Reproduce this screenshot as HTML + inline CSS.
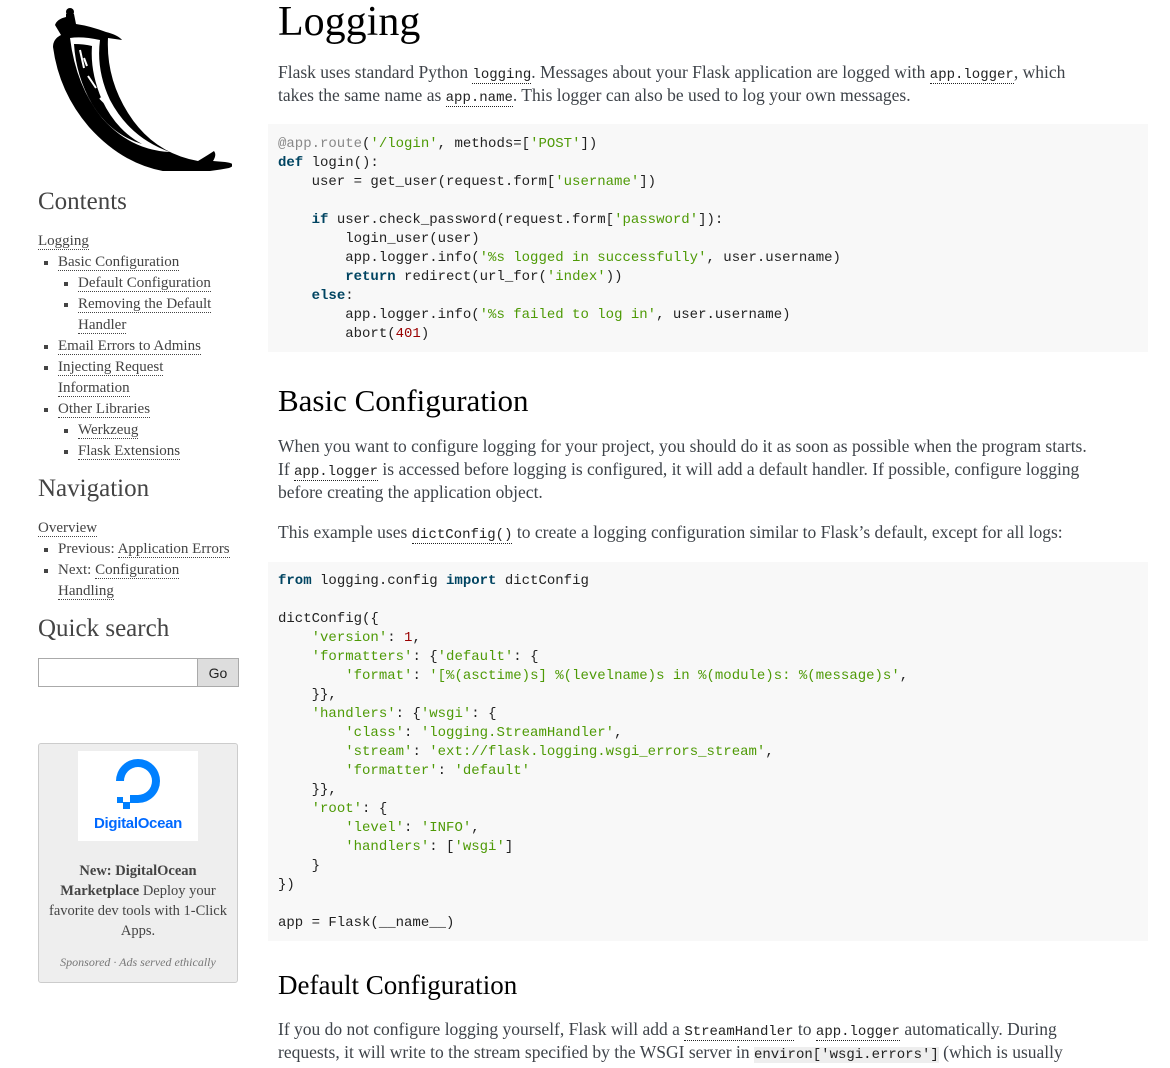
<!DOCTYPE html>
<html><head><meta charset="utf-8"><style>
body{margin:0;width:1170px;height:1068px;overflow:hidden;background:#fff;font-family:"Liberation Serif",serif;color:#3e4349;position:relative}
.a{position:absolute;white-space:nowrap}
.p{font-size:17.5px;line-height:23px;color:#3e4349}
code,.tt{font-family:"Liberation Mono",monospace;font-size:14px;line-height:10px;color:#222}
.u{border-bottom:1px dotted #222}
.pre{position:absolute;left:268px;width:880px;background:#f8f8f8;font-family:"Liberation Mono",monospace;font-size:14px;line-height:19px;color:#222;white-space:pre;padding-left:10px;box-sizing:border-box}
.k{color:#004461;font-weight:bold}.s{color:#4e9a06}.n{color:#990000}.d{color:#888}
h1,h2{margin:0;font-weight:normal;color:#000}
.sb{font-size:15px;line-height:21px;color:#444}
.sb a{color:#444;text-decoration:none;border-bottom:1px dotted #444}
.sb .b{position:absolute;width:4px;height:4px;background:#444}
.sh{font-size:25px;color:#444}
</style></head><body>
<svg class="a" style="left:40px;top:6px" width="192" height="165" viewBox="0 0 192 165">
<circle cx="30" cy="6" r="4" fill="#000"/>
<path d="M26 8 h8 l2 10 q14 2 30 8 q12 3 16 8 l-14 -2 q-2 40 20 75 q25 40 70 48 q10 -6 16 -10 q3 4 -1 10 l12 1 q14 2 4 6 q-30 6 -60 4 q-45 -6 -80 -45 q-30 -35 -36 -80 q0 -8 8 -12 l-6 -10 q2 -6 11 -8z" fill="#000"/>
<path d="M30 32 q12 -2 30 2 q-4 30 10 60 q20 38 60 52 q-40 -2 -68 -34 q-26 -32 -32 -80z" fill="#fff"/>
<path d="M34 38 q10 0 18 2 q-2 26 10 54 q14 30 40 44 q-32 -10 -50 -40 q-16 -28 -18 -60z" fill="#000"/>
<path d="M40 44 l4 18 M48 70 l8 12 M60 92 l10 10 M44 52 l3 8" stroke="#fff" stroke-width="2"/>
</svg>
<div class="a sh" style="left:38px;top:188px">Contents</div>
<div class="sb">
<div class="a" style="left:38px;top:231px"><a>Logging</a></div>
<div class="b" style="left:44px;top:261px"></div><div class="a" style="left:58px;top:252px"><a>Basic Configuration</a></div>
<div class="b" style="left:64px;top:282px"></div><div class="a" style="left:78px;top:273px"><a>Default Configuration</a></div>
<div class="b" style="left:64px;top:303px"></div><div class="a" style="left:78px;top:294px"><a>Removing the Default</a></div>
<div class="a" style="left:78px;top:315px"><a>Handler</a></div>
<div class="b" style="left:44px;top:345px"></div><div class="a" style="left:58px;top:336px"><a>Email Errors to Admins</a></div>
<div class="b" style="left:44px;top:366px"></div><div class="a" style="left:58px;top:357px"><a>Injecting Request</a></div>
<div class="a" style="left:58px;top:378px"><a>Information</a></div>
<div class="b" style="left:44px;top:408px"></div><div class="a" style="left:58px;top:399px"><a>Other Libraries</a></div>
<div class="b" style="left:64px;top:429px"></div><div class="a" style="left:78px;top:420px"><a>Werkzeug</a></div>
<div class="b" style="left:64px;top:450px"></div><div class="a" style="left:78px;top:441px"><a>Flask Extensions</a></div>
</div>
<div class="a sh" style="left:38px;top:475px">Navigation</div>
<div class="sb">
<div class="a" style="left:38px;top:518px"><a>Overview</a></div>
<div class="b" style="left:44px;top:548px"></div><div class="a" style="left:58px;top:539px">Previous: <a>Application Errors</a></div>
<div class="b" style="left:44px;top:569px"></div><div class="a" style="left:58px;top:560px">Next: <a>Configuration</a></div>
<div class="a" style="left:58px;top:581px"><a>Handling</a></div>
</div>
<div class="a sh" style="left:38px;top:615px">Quick search</div>
<div class="a" style="left:38px;top:658px;width:159px;height:27px;border:1px solid #aaa;background:#fff"></div>
<div class="a" style="left:197px;top:658px;width:40px;height:27px;border:1px solid #aaa;background:#ddd;font-family:'Liberation Sans',sans-serif;font-size:14px;line-height:28px;text-align:center;color:#222">Go</div>
<div class="a" style="left:38px;top:743px;width:198px;height:238px;background:#eee;border:1px solid #ccc;border-radius:3px;white-space:normal;text-align:center">
<div style="margin:7px auto 0;width:120px;height:90px;background:#fff;position:relative">
<svg width="120" height="60" viewBox="0 0 120 60" style="position:absolute;left:0;top:6px"><path d="M60 46 v-8 a14 14 0 1 0 -14 -14 h-8 a22 22 0 1 1 22 22z" fill="#0080ff"/><rect x="52" y="38" width="8" height="8" fill="#0080ff"/><rect x="45" y="45" width="7" height="7" fill="#0080ff"/><rect x="39" y="40" width="6" height="6" fill="#0080ff"/></svg>
<div style="position:absolute;top:64px;width:120px;font-family:'Liberation Sans',sans-serif;font-size:15px;color:#0069ff;font-weight:bold;letter-spacing:-0.3px">DigitalOcean</div></div>
<div style="font-size:14.5px;line-height:20px;color:#444;margin-top:20px;padding:0 6px"><b>New: DigitalOcean Marketplace</b> Deploy your favorite dev tools with 1-Click Apps.</div>
<div style="font-size:12px;font-style:italic;color:#777;margin-top:14px">Sponsored · Ads served ethically</div>
</div>

<h1 class="a" style="left:278px;top:-2px;font-size:42px">Logging</h1>
<div class="a p" style="left:278px;top:61px">Flask uses standard Python <code class="u">logging</code>. Messages about your Flask application are logged with <code class="u">app.logger</code>, which<br>takes the same name as <code class="u">app.name</code>. This logger can also be used to log your own messages.</div>
<div class="pre" style="top:124px;height:228px;padding-top:11px"><span class="d">@app.route</span>(<span class="s">'/login'</span>, methods=[<span class="s">'POST'</span>])
<span class="k">def</span> login():
    user = get_user(request.form[<span class="s">'username'</span>])

    <span class="k">if</span> user.check_password(request.form[<span class="s">'password'</span>]):
        login_user(user)
        app.logger.info(<span class="s">'%s logged in successfully'</span>, user.username)
        <span class="k">return</span> redirect(url_for(<span class="s">'index'</span>))
    <span class="k">else</span>:
        app.logger.info(<span class="s">'%s failed to log in'</span>, user.username)
        abort(<span class="n">401</span>)</div>
<h2 class="a" style="left:278px;top:383px;font-size:31px">Basic Configuration</h2>
<div class="a p" style="left:278px;top:435px">When you want to configure logging for your project, you should do it as soon as possible when the program starts.<br>If <code class="u">app.logger</code> is accessed before logging is configured, it will add a default handler. If possible, configure logging<br>before creating the application object.</div>
<div class="a p" style="left:278px;top:521px">This example uses <code class="u">dictConfig()</code> to create a logging configuration similar to Flask’s default, except for all logs:</div>
<div class="pre" style="top:562px;height:379px;padding-top:10px"><span class="k">from</span> logging.config <span class="k">import</span> dictConfig

dictConfig({
    <span class="s">'version'</span>: <span class="n">1</span>,
    <span class="s">'formatters'</span>: {<span class="s">'default'</span>: {
        <span class="s">'format'</span>: <span class="s">'[%(asctime)s] %(levelname)s in %(module)s: %(message)s'</span>,
    }},
    <span class="s">'handlers'</span>: {<span class="s">'wsgi'</span>: {
        <span class="s">'class'</span>: <span class="s">'logging.StreamHandler'</span>,
        <span class="s">'stream'</span>: <span class="s">'ext://flask.logging.wsgi_errors_stream'</span>,
        <span class="s">'formatter'</span>: <span class="s">'default'</span>
    }},
    <span class="s">'root'</span>: {
        <span class="s">'level'</span>: <span class="s">'INFO'</span>,
        <span class="s">'handlers'</span>: [<span class="s">'wsgi'</span>]
    }
})

app = Flask(__name__)</div>
<h2 class="a" style="left:278px;top:970px;font-size:27px">Default Configuration</h2>
<div class="a p" style="left:278px;top:1018px">If you do not configure logging yourself, Flask will add a <code class="u">StreamHandler</code> to <code class="u">app.logger</code> automatically. During<br>requests, it will write to the stream specified by the WSGI server in <code style="background:#eee">environ['wsgi.errors']</code> (which is usually</div>
</body></html>
